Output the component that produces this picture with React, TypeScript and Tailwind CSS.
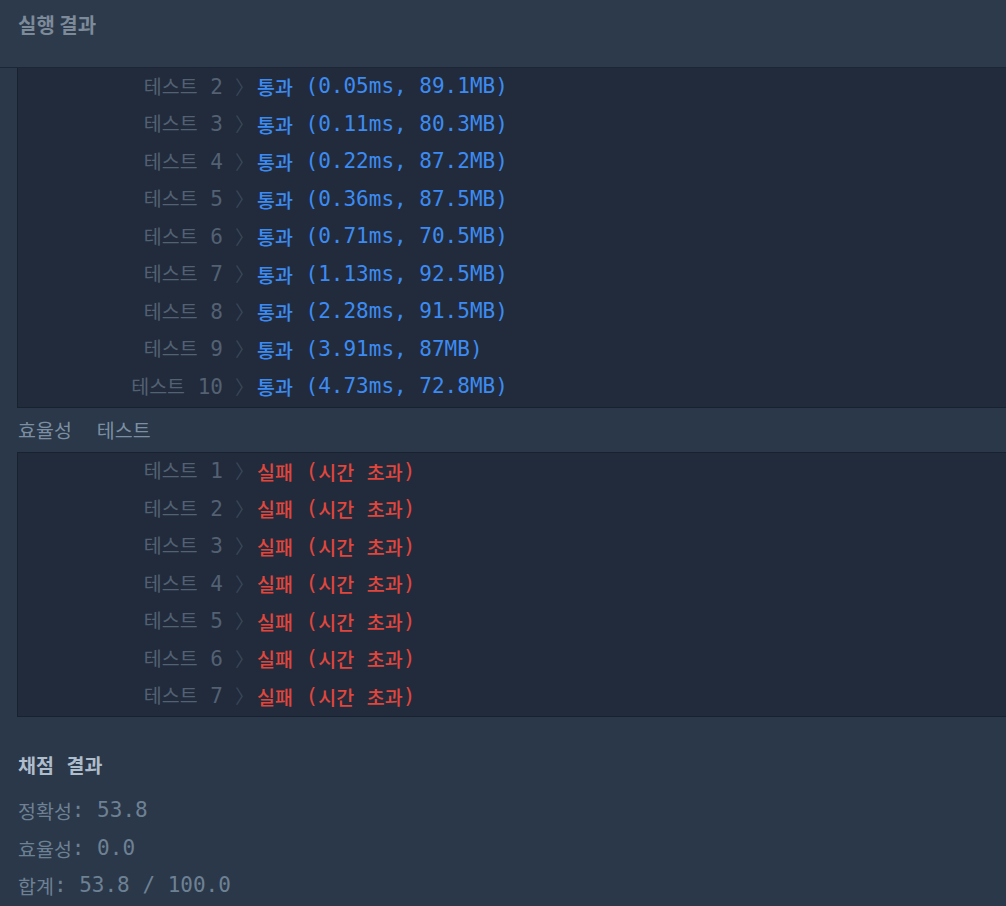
import React from "react";

const passed = [
  ["2", "0.05ms, 89.1MB"],
  ["3", "0.11ms, 80.3MB"],
  ["4", "0.22ms, 87.2MB"],
  ["5", "0.36ms, 87.5MB"],
  ["6", "0.71ms, 70.5MB"],
  ["7", "1.13ms, 92.5MB"],
  ["8", "2.28ms, 91.5MB"],
  ["9", "3.91ms, 87MB"],
  ["10", "4.73ms, 72.8MB"],
];

const failed = ["1", "2", "3", "4", "5", "6", "7"];

function Ko({ children, className = "" }: { children: React.ReactNode; className?: string }) {
  return (
    <span className={"font-['Noto_Sans_CJK_KR','Noto_Sans',sans-serif] text-[19.5px] " + className}>
      {children}
    </span>
  );
}

function Mo({ children, className = "" }: { children: React.ReactNode; className?: string }) {
  return (
    <span className={"font-['DejaVu_Sans_Mono','Noto_Sans_CJK_KR',monospace] text-[21px] " + className}>
      {children}
    </span>
  );
}

function Row({ n, children }: { n: string; children: React.ReactNode }) {
  return (
    <div className="flex h-[37.5px] items-center whitespace-pre">
      <div className="w-[205px] shrink-0 text-right text-[#536173]">
        <Ko>테스트</Ko>
        <Mo> {n}</Mo>
      </div>
      <div className="w-[34px] shrink-0 pl-[12px] font-['Noto_Sans_CJK_KR',sans-serif] text-[19px] text-[#3a4757]">
        〉
      </div>
      <div className="flex items-center">{children}</div>
    </div>
  );
}

export default function App() {
  return (
    <div className="min-h-[906px] w-[1006px] overflow-hidden bg-[#2a3849]">
      <div className="flex h-[68px] items-start border-b border-[#1c2635] bg-[#2c3a4b] pl-[18px] pt-[10px]">
        <span className="font-['Noto_Sans_CJK_KR',sans-serif] text-[20px] font-bold text-[#7c8a9a]">실행 결과</span>
      </div>

      <div className="ml-[17px] border-b border-l border-[#18212e] bg-[#212b3c] pb-[1px]">
        {passed.map(([n, r]) => (
          <Row key={n} n={n}>
            <Ko className="font-medium text-[#3d8bf2]">통과</Ko>
            <Mo className="text-[#3d8bf2]"> ({r})</Mo>
          </Row>
        ))}
      </div>

      <div className="flex h-[44px] items-center pl-[18px] whitespace-pre text-[#7c8fa2]">
        <Ko>효율성</Ko>
        <Ko className="ml-[25px]">테스트</Ko>
      </div>

      <div className="ml-[17px] border-b border-l border-t border-[#18212e] bg-[#212b3c] pb-[1px]">
        {failed.map((n) => (
          <Row key={n} n={n}>
            <Ko className="font-medium text-[#e0463c]">실패</Ko>
            <Mo className="text-[#e0463c]"> (</Mo>
            <Ko className="font-medium text-[#e0463c]">시간</Ko>
            <Mo className="text-[#e0463c]"> </Mo>
            <Ko className="font-medium text-[#e0463c]">초과</Ko>
            <Mo className="text-[#e0463c]">)</Mo>
          </Row>
        ))}
      </div>

      <div className="pl-[18px] pt-[30px] whitespace-pre">
        <div className="flex h-[36px] items-center text-[#afbccb]">
          <Ko className="font-bold">채점</Ko>
          <Mo> </Mo>
          <Ko className="font-bold">결과</Ko>
        </div>
        <div className="mt-[9px] flex h-[37.5px] items-center text-[#6e8194]">
          <Ko>정확성</Ko>
          <Mo>: 53.8</Mo>
        </div>
        <div className="flex h-[37.5px] items-center text-[#6e8194]">
          <Ko>효율성</Ko>
          <Mo>: 0.0</Mo>
        </div>
        <div className="flex h-[37.5px] items-center text-[#6e8194]">
          <Ko>합계</Ko>
          <Mo>: 53.8 / 100.0</Mo>
        </div>
      </div>
    </div>
  );
}
